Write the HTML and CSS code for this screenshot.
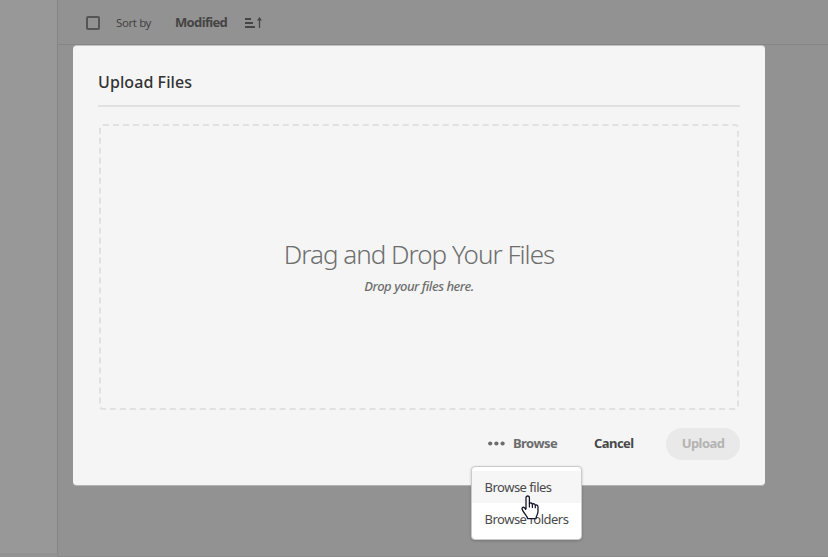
FILE: index.html
```html
<!DOCTYPE html>
<html lang="en">
<head>
<meta charset="utf-8">
<title>Upload Files</title>
<link rel="stylesheet" href="styles.css">
</head>
<body>
<div class="app">
  <aside class="rail"></aside>
  <main class="content">
    <header class="toolbar">
      <span class="checkbox"></span>
      <span class="sort-label">Sort by</span>
      <span class="sort-value">Modified</span>
      <svg class="sort-icon" width="18" height="12" viewBox="0 0 18 12">
        <path d="M0 2h6M0 6h8M0 10h10" fill="none" stroke="#464646" stroke-width="2"/>
        <path d="M14.5 11V2" fill="none" stroke="#464646" stroke-width="1.3"/>
        <path d="M12 3.6 14.5 0 17 3.6z" fill="#464646"/>
      </svg>
    </header>
  </main>
</div>
<section class="dialog">
  <h1 class="dialog-title">Upload Files</h1>
  <div class="dropzone">
    <h2 class="drop-title">Drag and Drop Your Files</h2>
    <p class="drop-hint">Drop your files here.</p>
  </div>
  <footer class="actions">
    <button class="browse">
      <svg width="17" height="5" viewBox="0 0 17 5" fill="#6c6c6c"><circle cx="2.2" cy="2.5" r="2.1"/><circle cx="8.4" cy="2.5" r="2.1"/><circle cx="14.6" cy="2.5" r="2.1"/></svg>
      <span class="button-text">Browse</span>
    </button>
    <button class="cancel"><span class="button-text">Cancel</span></button>
    <button class="upload" disabled><span class="button-text">Upload</span></button>
  </footer>
</section>
<div class="menu">
  <div class="item hover">Browse files</div>
  <div class="item">Browse folders</div>
</div>
<svg class="cursor" width="18" height="26" viewBox="0 0 18 26">
  <path d="M5 14V3C5 .3 8.4.3 8.4 3V8.8C9 7.5 11.3 7.7 11.4 9.5 12.1 8.3 14.2 8.6 14.3 10.3 15.3 9.4 17 10.1 17 11.7V16.5C17 19.5 15.2 20.3 15 23.6H6.7C6.5 21.6 3.7 19.4 1.5 15.1.1 12.6 2.3 11.3 3.8 13.1L5 14.8" fill="#fff" stroke="#15152b" stroke-width="1.3" stroke-linejoin="round"/>
  <path d="M8.4 8.5v4M11.4 9.5v3.5M14.3 10.3v3" fill="none" stroke="#15152b" stroke-width="1.2"/>
</svg>
</body>
</html>
```
FILE: styles.css
```css
* { box-sizing: border-box; }
body {
  margin: 0;
  width: 828px;
  height: 557px;
  overflow: hidden;
  position: relative;
  font-family: "Noto Sans", "Open Sans", sans-serif;
  font-size: 13px;
  background: #929292;
}
h1, h2, p { margin: 0; }
button { border: 0; padding: 0; background: none; font: inherit; }
span, h1, h2, p, button { white-space: nowrap; }
.app { display: flex; height: 557px; }
.rail {
  width: 58px;
  background: #989898;
  border-right: 1px solid #858585;
  border-bottom: 4px solid #929292;
}
.content { flex: 1; border-bottom: 1px solid #8a8a8a; }
.toolbar {
  display: flex;
  align-items: center;
  height: 45px;
  padding-left: 28px;
  border-bottom: 1px solid #858585;
}
.checkbox { width: 14px; height: 14px; margin-top: 2px; border: 2px solid #555; border-radius: 2px; }
.sort-label { width: 59px; margin-left: 16px; font-size: 11.5px; letter-spacing: -0.4px; color: #444; }
.sort-value { width: 70px; font-weight: 700; letter-spacing: -0.65px; color: #444; }
.sort-icon { margin-top: 1px; }
.dialog {
  position: absolute;
  left: 73px;
  top: 45px;
  width: 692px;
  height: 441px;
  padding: 0 25px;
  background: #f5f5f5;
  border-radius: 4px;
  border-top: 1px solid #c2c2c2;
  border-bottom: 1px solid #b2b4b3;
}
.dialog-title {
  height: 61px;
  padding-top: 24px;
  border-bottom: 2px solid #e1e1e1;
  font-size: 16px;
  font-weight: 500;
  line-height: 24px;
  letter-spacing: 0.08px;
  color: #323232;
}
.dropzone {
  margin: 17px 1px 0;
  height: 286px;
  border: 2px dashed #e1e1e1;
  border-radius: 4px;
  padding-top: 108px;
  text-align: center;
}
.drop-title { font-size: 26px; font-weight: 300; line-height: 40px; letter-spacing: -1px; color: #6e6e6e; }
.drop-hint { margin-top: 3px; font-size: 13px; font-style: italic; font-weight: 500; line-height: 18px; letter-spacing: -0.45px; color: #6e6e6e; }
.actions { display: flex; align-items: center; height: 32px; margin-top: 18px; padding-left: 390px; font-weight: 700; }
.browse { display: flex; align-items: center; gap: 8px; width: 106px; color: #6c6c6c; }
.browse svg { position: relative; top: -1px; }
.cancel { width: 72px; text-align: left; color: #484848; }
.upload { width: 74px; height: 32px; border-radius: 16px; background: #e9e9e9; color: #b3b3b3; }
.button-text { display: inline-block; padding-bottom: 2px; letter-spacing: -0.55px; }
.menu {
  position: absolute;
  left: 471px;
  top: 466px;
  width: 111px;
  height: 74px;
  padding: 4px 0;
  background: #fff;
  border: 1px solid #cacaca;
  border-radius: 4px;
  box-shadow: 0 1px 3px rgba(0, 0, 0, .2);
  color: #4a4a4a;
}
.item { height: 32px; padding-left: 12.5px; line-height: 32px; letter-spacing: -0.5px; white-space: nowrap; }
.hover { background: #f6f6f6; }
.cursor { position: absolute; left: 521px; top: 495px; }
```
